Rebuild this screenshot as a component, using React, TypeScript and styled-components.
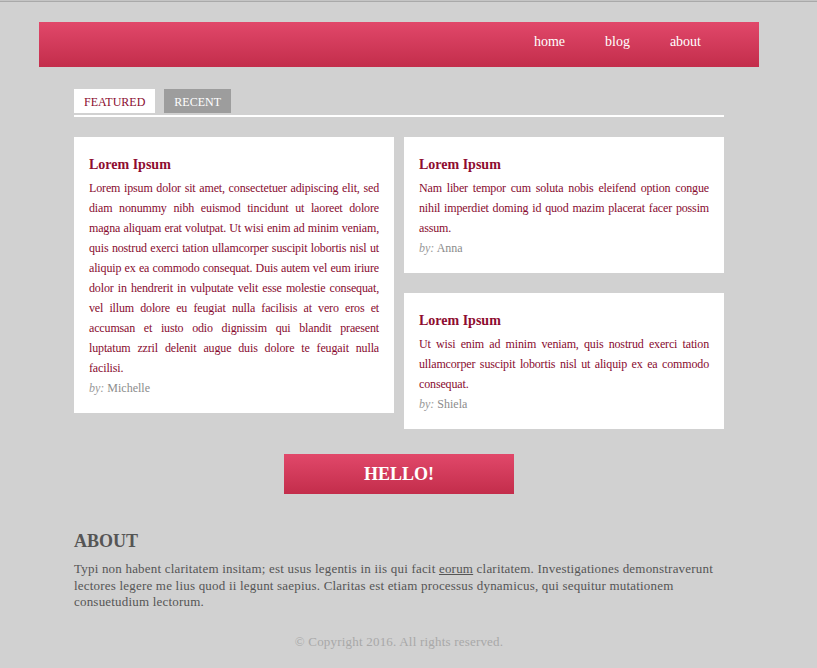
import React from "react";
import styled, { createGlobalStyle } from "styled-components";

const GlobalStyle = createGlobalStyle`
  html {
    margin: 0;
    background: #d1d1d1;
    border-top: 1px solid #c4c4c4;
  }
  body {
    margin: 0;
    background: #d1d1d1;
    border-top: 1px solid #a9a9a9;
    font-family: "Liberation Serif", "Times New Roman", serif;
  }
`;

const Page = styled.div`
  width: 720px;
  margin-left: 39px;
  padding-top: 20px;
  padding-bottom: 20px;
`;

const Header = styled.header`
  height: 45px;
  background: linear-gradient(to bottom, #e1486a, #c32d4b);
  display: flex;
  justify-content: flex-end;
  align-items: flex-start;
  padding: 12px 58px 0 0;
  box-sizing: border-box;
`;

const Nav = styled.nav`
  display: flex;
  gap: 40px;
`;

const NavLink = styled.a`
  color: #fff;
  font-size: 14px;
  line-height: 16px;
  text-decoration: none;
`;

const Main = styled.main`
  margin: 22px 35px 0;
`;

const TabBar = styled.div`
  display: flex;
  gap: 9px;
  padding-bottom: 2px;
  border-bottom: 2px solid #fff;
`;

const Tab = styled.div<{ $active?: boolean }>`
  height: 24px;
  line-height: 26px;
  padding: 0 10px;
  font-size: 12px;
  overflow: hidden;
  background: ${(p) => (p.$active ? "#fff" : "#9d9d9d")};
  color: ${(p) => (p.$active ? "#8a0c30" : "#fff")};
`;

const Grid = styled.div`
  margin-top: 20px;
  display: grid;
  grid-template-columns: 320px 320px;
  column-gap: 10px;
  align-items: start;
`;

const Column = styled.div`
  display: flex;
  flex-direction: column;
  gap: 20px;
`;

const Card = styled.article`
  background: #fff;
  padding: 20px 15px 15px;
`;

const CardTitle = styled.h3`
  margin: 0 0 5px;
  font-size: 14px;
  line-height: 16px;
  font-weight: bold;
  color: #8e0c30;
`;

const CardText = styled.p`
  margin: 0;
  font-size: 12px;
  line-height: 20px;
  letter-spacing: -0.15px;
  color: #880b2f;
  text-align: justify;
`;

const Byline = styled.div`
  font-size: 12px;
  line-height: 20px;
  color: #8c8c8c;
`;

const By = styled.em`
  color: #9a9a9a;
`;

const ButtonRow = styled.div`
  display: flex;
  justify-content: center;
  margin-top: 25px;
`;

const HelloButton = styled.button`
  width: 230px;
  height: 40px;
  border: none;
  padding: 0;
  background: linear-gradient(to bottom, #e1486a, #c32d4b);
  color: #fff;
  font-family: "Liberation Serif", "Times New Roman", serif;
  font-size: 18px;
  font-weight: bold;
  cursor: pointer;
`;

const About = styled.section`
  margin-top: 36px;
`;

const AboutTitle = styled.h2`
  margin: 0;
  font-size: 18px;
  line-height: 22px;
  font-weight: bold;
  color: #555;
`;

const AboutText = styled.p`
  margin: 9px 0 0;
  font-size: 13px;
  line-height: 16.5px;
  letter-spacing: 0.2px;
  color: #555;
`;

const AboutLink = styled.a`
  color: #555;
  text-decoration: underline;
`;

const Footer = styled.footer`
  margin-top: 23px;
  text-align: center;
  font-size: 13px;
  line-height: 16.5px;
  letter-spacing: 0.2px;
  color: #a8a8a8;
`;

type Post = { text: string; author: string };

const PostCard = ({ text, author }: Post) => (
  <Card>
    <CardTitle>Lorem Ipsum</CardTitle>
    <CardText>{text}</CardText>
    <Byline>
      <By>by:</By> {author}
    </Byline>
  </Card>
);

export default function App() {
  return (
    <>
      <GlobalStyle />
      <Page>
        <Header>
          <Nav>
            <NavLink href="#">home</NavLink>
            <NavLink href="#">blog</NavLink>
            <NavLink href="#">about</NavLink>
          </Nav>
        </Header>
        <Main>
          <TabBar>
            <Tab $active>FEATURED</Tab>
            <Tab>RECENT</Tab>
          </TabBar>
          <Grid>
            <Column>
              <PostCard
                text="Lorem ipsum dolor sit amet, consectetuer adipiscing elit, sed diam nonummy nibh euismod tincidunt ut laoreet dolore magna aliquam erat volutpat. Ut wisi enim ad minim veniam, quis nostrud exerci tation ullamcorper suscipit lobortis nisl ut aliquip ex ea commodo consequat. Duis autem vel eum iriure dolor in hendrerit in vulputate velit esse molestie consequat, vel illum dolore eu feugiat nulla facilisis at vero eros et accumsan et iusto odio dignissim qui blandit praesent luptatum zzril delenit augue duis dolore te feugait nulla facilisi."
                author="Michelle"
              />
            </Column>
            <Column>
              <PostCard
                text="Nam liber tempor cum soluta nobis eleifend option congue nihil imperdiet doming id quod mazim placerat facer possim assum."
                author="Anna"
              />
              <PostCard
                text="Ut wisi enim ad minim veniam, quis nostrud exerci tation ullamcorper suscipit lobortis nisl ut aliquip ex ea commodo consequat."
                author="Shiela"
              />
            </Column>
          </Grid>
          <ButtonRow>
            <HelloButton>HELLO!</HelloButton>
          </ButtonRow>
          <About>
            <AboutTitle>ABOUT</AboutTitle>
            <AboutText>
              Typi non habent claritatem insitam; est usus legentis in iis qui facit{" "}
              <AboutLink href="#">eorum</AboutLink> claritatem. Investigationes demonstraverunt
              lectores legere me lius quod ii legunt saepius. Claritas est etiam processus
              dynamicus, qui sequitur mutationem consuetudium lectorum.
            </AboutText>
          </About>
          <Footer>© Copyright 2016. All rights reserved.</Footer>
        </Main>
      </Page>
    </>
  );
}
